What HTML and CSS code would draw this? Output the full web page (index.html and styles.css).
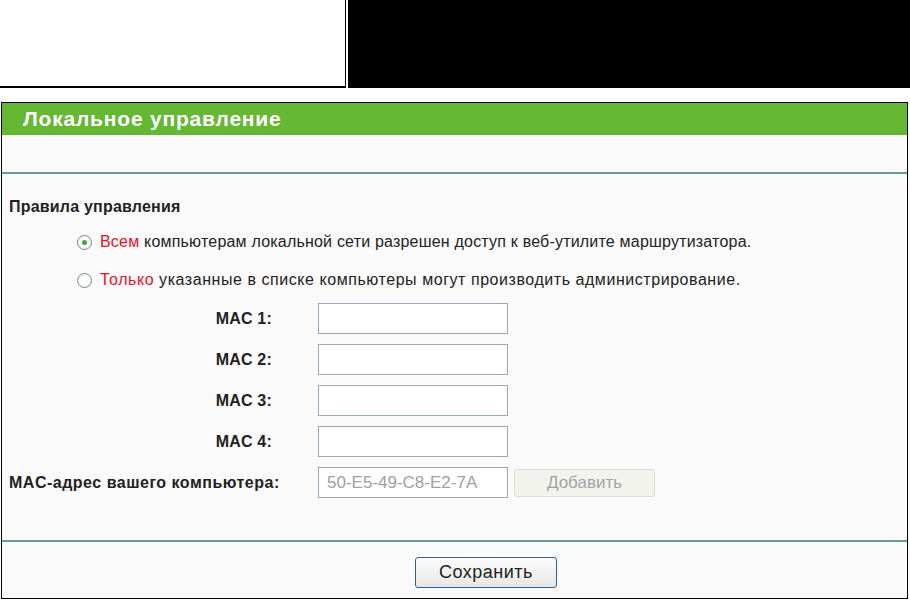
FILE: index.html
```html
<!DOCTYPE html>
<html lang="ru">
<head>
    <meta charset="UTF-8">
    <title>Локальное управление</title>
    <link rel="stylesheet" href="styles.css">
</head>
<body>
    <div class="top">
        <div class="logo"></div>
        <div class="banner"></div>
    </div>

    <div class="panel">
        <div class="title">Локальное управление</div>
        <div class="blank"></div>
        <div class="line"></div>

        <div class="content">
            <div class="heading">Правила управления</div>

            <label class="choice">
                <input type="radio" name="mode" checked>
                <span><em>Всем</em> компьютерам локальной сети разрешен доступ к веб-утилите маршрутизатора.</span>
            </label>
            <label class="choice">
                <input type="radio" name="mode">
                <span class="wide"><em>Только</em> указанные в списке компьютеры могут производить администрирование.</span>
            </label>

            <div class="macs">
                <div class="lbl">MAC 1:</div>
                <input type="text" class="field">
                <div></div>

                <div class="lbl">MAC 2:</div>
                <input type="text" class="field">
                <div></div>

                <div class="lbl">MAC 3:</div>
                <input type="text" class="field">
                <div></div>

                <div class="lbl">MAC 4:</div>
                <input type="text" class="field">
                <div></div>

                <div class="lbl left">MAC-адрес вашего компьютера:</div>
                <input type="text" class="field" value="50-E5-49-C8-E2-7A" disabled>
                <button class="add" disabled>Добавить</button>
            </div>
        </div>

        <div class="line"></div>
        <div class="footer">
            <button class="save">Сохранить</button>
        </div>
    </div>
</body>
</html>
```

FILE: styles.css
```css
body {
    margin: 0;
    font-family: "Liberation Sans", Arial, sans-serif;
    font-size: 16px;
    letter-spacing: 0.2px;
    color: #222;
    background: #fff;
}
.top {
    display: flex;
    height: 88px;
}
.logo {
    width: 346px;
    background: #fff;
    border-bottom: 2px solid #000;
    border-right: 1px solid #000;
    box-sizing: border-box;
}
.banner {
    flex: 1;
    margin-left: 2px;
    background: #000;
}
.panel {
    margin: 14px 0 0 1px;
    width: 907px;
    border: 1px solid #000;
    box-sizing: border-box;
    background: #fafafa;
}
.title {
    height: 32px;
    line-height: 32px;
    padding-left: 21px;
    background: #64b832;
    color: #fff;
    font-size: 21px;
    letter-spacing: 0.8px;
    font-weight: bold;
}
.blank {
    height: 37px;
}
.line {
    height: 2px;
    background: #66a386;
}
.content {
    padding: 22px 0 42px 7px;
}
.heading {
    height: 22px;
    line-height: 22px;
    font-weight: bold;
    margin-bottom: 5px;
}
.choice {
    display: flex;
    align-items: center;
    height: 38px;
    padding-left: 68px;
}
.choice em {
    font-style: normal;
    color: #e8112d;
}
.choice .wide {
    letter-spacing: 0.55px;
}
.choice input {
    appearance: none;
    width: 15px;
    height: 15px;
    margin: 0 8px 0 0;
    border: 1px solid #7b8896;
    border-radius: 50%;
    background: radial-gradient(circle, #fff 40%, #e2e5ea 100%);
    box-sizing: border-box;
    position: relative;
}
.choice input:checked::after {
    content: "";
    position: absolute;
    left: 4px;
    top: 4px;
    width: 5px;
    height: 5px;
    border-radius: 50%;
    background: #3ea838;
}
.macs {
    margin-top: 4px;
    display: grid;
    grid-template-columns: 263px 190px 141px;
    grid-auto-rows: 31px;
    column-gap: 46px;
    row-gap: 10px;
    align-items: center;
}
.macs .add {
    margin-left: -40px;
}
.lbl {
    text-align: right;
    font-weight: bold;
}
.lbl.left {
    text-align: left;
    white-space: nowrap;
    letter-spacing: 0.5px;
}
.field {
    width: 190px;
    height: 31px;
    box-sizing: border-box;
    border: 1px solid #9aa9ba;
    background: #fff;
    font-family: inherit;
    font-size: 17px;
    padding: 0 8px;
}
.field:disabled {
    color: #a0a0a0;
}
.add {
    width: 141px;
    height: 28px;
    border: 1px solid #dcdcd2;
    border-radius: 3px;
    background: #f3f3ee;
    color: #a3a3a3;
    font-family: inherit;
    font-size: 17px;
}
.footer {
    display: flex;
    justify-content: center;
    padding: 15px 0 10px 63px;
}
.save {
    width: 142px;
    height: 31px;
    border: 1px solid #2f5f97;
    border-radius: 3px;
    background: linear-gradient(#fdfdfd, #e6e6e6);
    color: #222;
    font-family: inherit;
    font-size: 18px;
    letter-spacing: 0.5px;
}
```
